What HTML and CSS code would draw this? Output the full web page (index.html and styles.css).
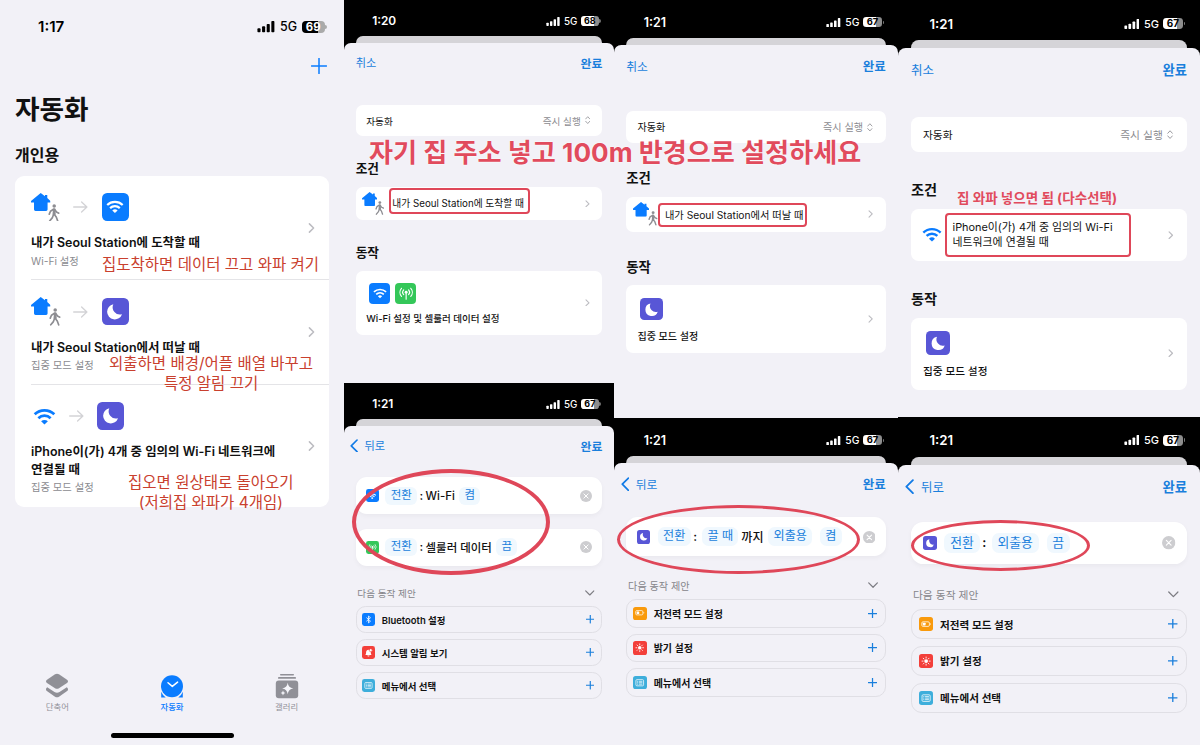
FILE: index.html
```html
<!DOCTYPE html>
<html lang="ko">
<head>
<meta charset="utf-8">
<title>자동화</title>
<link rel="stylesheet" href="styles.css">
</head>
<body>
<svg class="defs" aria-hidden="true">
  <symbol id="signal" viewBox="0 0 21 14"><rect x="0" y="9" width="3.8" height="5" rx="1"/><rect x="5.7" y="6.6" width="3.8" height="7.4" rx="1"/><rect x="11.4" y="3.6" width="3.8" height="10.4" rx="1"/><rect x="17.1" y="0" width="3.8" height="14" rx="1"/></symbol>
  <symbol id="wifi" viewBox="0 0 24 18"><path d="M1.6 6.7a15 15 0 0 1 20.8 0M5.5 10.8a9.4 9.4 0 0 1 13 0" fill="none" stroke="currentColor" stroke-width="2.9"/><path d="M12 17.5l-3.6-3.4a5.2 5.2 0 0 1 7.2 0z" fill="currentColor"/></symbol>
  <symbol id="moon" viewBox="0 0 24 24"><path d="M10.6 4.300A7.900 7.900 0 1 0 19.600 14.600 7.500 7.500 0 0 1 10.600 4.300z" fill="#fff"/></symbol>
  <symbol id="house" viewBox="0 0 19.5 18"><path d="M9.700 0L14 3.300V2h2.300v3.100L19.500 8v1.600h-2.900V16.500q0 1.500-1.500 1.500H4.500Q3 18 3 16.500V9.600H0V8z" fill="#0a7cff"/></symbol>
  <symbol id="walk" viewBox="0 0 12 18"><circle cx="6.3" cy="1.900" r="1.800" fill="#8d8d92"/><path d="M6.200 5.200L5.700 10.500M5.600 5.300L2.500 7.200L1.300 10.200M6.700 5.300L8.600 8L11 9.200M5.700 10.300L4.500 13.700L1.800 17M6.200 10.300L8.400 13L9.800 17" fill="none" stroke="#8d8d92" stroke-width="1.700" stroke-linecap="round" stroke-linejoin="round"/><path d="M5 4.500h2.300l.6 6.300H4.700z" fill="#8d8d92"/></symbol>
  <symbol id="arrow" viewBox="0 0 15 12"><path d="M.7 6h13M8.600 1l5.300 5-5.300 5" fill="none" stroke="#d3d3d6" stroke-width="1.300" stroke-linecap="round" stroke-linejoin="round"/></symbol>
  <symbol id="chev" viewBox="0 0 8 12"><path d="M1.600 1.300L6.400 6 1.600 10.700" fill="none" stroke="#bcbcc1" stroke-width="1.700" stroke-linecap="round" stroke-linejoin="round"/></symbol>
  <symbol id="updown" viewBox="0 0 9 14"><path d="M1 5L4.500 1.200 8 5M1 9l3.500 3.800L8 9" fill="none" stroke="#8a8a8f" stroke-width="1.300" stroke-linecap="round" stroke-linejoin="round"/></symbol>
  <symbol id="back" viewBox="0 0 12 20"><path d="M10.300 1.500L1.800 10l8.500 8.500" fill="none" stroke="#127be6" stroke-width="2.400" stroke-linecap="round" stroke-linejoin="round"/></symbol>
  <symbol id="down" viewBox="0 0 14 9"><path d="M1 1.300l6 6 6-6" fill="none" stroke="#7d7d83" stroke-width="1.700" stroke-linecap="round" stroke-linejoin="round"/></symbol>
  <symbol id="plus" viewBox="0 0 16 16"><path d="M8 .5v15M.5 8h15" fill="none" stroke="currentColor" stroke-width="var(--w,1.500)" stroke-linecap="round"/></symbol>
  <symbol id="clear" viewBox="0 0 18 18"><circle cx="9" cy="9" r="9" fill="#cdcdd0"/><path d="M5.800 5.800l6.400 6.400m0-6.400l-6.400 6.400" stroke="#fff" stroke-width="1.500" stroke-linecap="round"/></symbol>
  <symbol id="antenna" viewBox="0 0 24 24"><g fill="none" stroke="#fff" stroke-width="1.500" stroke-linecap="round"><path d="M12 11v9M8.800 14a4.500 4.500 0 0 1 0-6.200M15.200 7.800a4.500 4.500 0 0 1 0 6.200M5.900 16.200a8 8 0 0 1 0-10.600M18.100 5.600a8 8 0 0 1 0 10.600"/></g><circle cx="12" cy="10.800" r="1.900" fill="#fff"/></symbol>
  <symbol id="bt" viewBox="0 0 24 24"><path d="M7.500 8l9 7.800-4.500 3.700v-15l4.500 3.700-9 7.800" fill="none" stroke="#fff" stroke-width="1.800" stroke-linejoin="round"/></symbol>
  <symbol id="bell" viewBox="0 0 24 24"><path d="M5 17.500c1.500-1.500 1.700-3 1.800-6C7 8 9 6 12 6c3.500 0 5 2.500 5.200 5.500.1 3 .3 4.500 1.800 6zM9.500 18.500h5a2.500 2.500 0 0 1-5 0z" fill="#fff"/><circle cx="17" cy="7" r="3.300" fill="#fff" stroke="#f33f3a" stroke-width="1.300"/></symbol>
  <symbol id="menu" viewBox="0 0 24 24"><rect x="4" y="5.500" width="16" height="13" rx="2.200" fill="none" stroke="#fff" stroke-width="1.500"/><path d="M6.500 9h2M10 9h7.500M6.500 12h2M10 12h7.500M6.500 15h2M10 15h7.500" stroke="#fff" stroke-width="1.500"/></symbol>
  <symbol id="power" viewBox="0 0 24 24"><rect x="3.500" y="7.500" width="15" height="9" rx="2.500" fill="none" stroke="#fff" stroke-width="1.500"/><rect x="5.500" y="9.500" width="5.500" height="5" rx="1" fill="#fff"/><path d="M20 10.200v3.600q1.500-.5 1.500-1.800t-1.500-1.800z" fill="#fff"/></symbol>
  <symbol id="sun" viewBox="0 0 24 24"><circle cx="12" cy="12" r="3.700" fill="#fff"/><path d="M12 4v2M12 18v2M4 12h2M18 12h2M6.300 6.300l1.400 1.400M16.300 16.300l1.400 1.400M6.300 17.700l1.400-1.400M16.300 7.700l1.400-1.400" stroke="#fff" stroke-width="1.700" stroke-linecap="round"/></symbol>
</svg>

<main class="board">
  <section class="phone home">
    <header class="status"><span class="time">1:17</span><svg class="sig"><use href="#signal"/></svg><span class="net">5G</span><span class="batt">69</span></header>
    <div class="add"><svg><use href="#plus"/></svg></div>
    <h1>자동화</h1>
    <h2>개인용</h2>
    <div class="list">
      <article>
        <div class="info">
          <div class="flowline"><span class="arrive"><svg class="hs"><use href="#house"/></svg><svg class="wk"><use href="#walk"/></svg></span><svg class="ar"><use href="#arrow"/></svg><span class="tile blue"><svg class="wf"><use href="#wifi"/></svg></span></div>
          <p class="name">내가 Seoul Station에 도착할 때</p><p class="sub">Wi-Fi 설정</p>
        </div><svg class="chev"><use href="#chev"/></svg>
      </article>
      <article class="leaving">
        <div class="info">
          <div class="flowline"><span class="arrive"><svg class="hs"><use href="#house"/></svg><svg class="wk"><use href="#walk"/></svg></span><svg class="ar"><use href="#arrow"/></svg><span class="tile violet"><svg><use href="#moon"/></svg></span></div>
          <p class="name">내가 Seoul Station에서 떠날 때</p><p class="sub">집중 모드 설정</p>
        </div><svg class="chev"><use href="#chev"/></svg>
      </article>
      <article class="wifi-row">
        <div class="info">
          <div class="flowline"><svg class="bigwifi"><use href="#wifi"/></svg><svg class="ar"><use href="#arrow"/></svg><span class="tile violet"><svg><use href="#moon"/></svg></span></div>
          <p class="name">iPhone이(가) 4개 중 임의의 Wi-Fi 네트워크에<br>연결될 때</p><p class="sub">집중 모드 설정</p>
        </div><svg class="chev"><use href="#chev"/></svg>
      </article>
    </div>
    <nav class="tabs">
      <div class="tab"><svg viewBox="0 0 24 26"><path d="M10 1.300q2-1.200 4 0l8 5.400q2 1.600 0 3.200L14 15.200q-2 1.200-4 0L2 9.900q-2-1.600 0-3.200z"/><path d="M2.200 13.300q-2.500 2.200 0 4L10 22.700q2 1.200 4 0l7.800-5.400q2.500-1.800 0-4L14.500 18q-2.500 1.400-5 0z" transform="translate(0 1)"/></svg><span>단축어</span></div>
      <div class="tab on"><svg viewBox="0 0 24 26"><circle cx="12" cy="13.200" r="11"/><path d="M1.200 18.800v5.800h4.500q-3-2-4.500-5.800zM22.800 18.800v5.800h-4.500q3-2 4.500-5.800z"/><path d="M8 9.700l4.300 3.700 5.300-4.300" fill="none" stroke="#fff" stroke-width="1.500" stroke-linecap="round" stroke-linejoin="round"/></svg><span>자동화</span></div>
      <div class="tab"><svg viewBox="0 0 24 26"><rect x="5" y="1" width="14" height="1.500" rx=".7"/><rect x="3" y="3.900" width="18" height="1.900" rx=".9"/><rect x=".8" y="7.400" width="22.400" height="17.800" rx="3"/><path d="M12.700 9.800q.6 5 5.600 5.700-5 .7-5.600 5.700-.6-5-5.600-5.700 5-.7 5.600-5.700zM8 17.500q.3 2.200 2.400 2.500-2.100.3-2.400 2.500-.3-2.200-2.400-2.500 2.100-.3 2.400-2.500z" fill="#f5f5fa"/></svg><span>갤러리</span></div>
    </nav>
    <div class="indicator"></div>
  </section>

  <div class="pair s">
    <section class="phone">
      <header class="status"><span class="time">1:20</span><svg class="sig"><use href="#signal"/></svg><span class="net">5G</span><span class="batt">68</span></header>
      <div class="behind"></div>
      <div class="sheet">
        <nav class="nav"><span>취소</span><b>완료</b></nav>
        <div class="card run"><span>자동화</span><em>즉시 실행</em><svg><use href="#updown"/></svg></div>
        <h3>조건</h3>
        <div class="card cond"><span class="arrive"><svg class="hs"><use href="#house"/></svg><svg class="wk"><use href="#walk"/></svg></span><span class="what">내가 Seoul Station에 도착할 때</span><svg class="chev"><use href="#chev"/></svg></div>
        <h3>동작</h3>
        <div class="card act"><div><div class="tiles"><span class="tile blue"><svg class="wf"><use href="#wifi"/></svg></span><span class="tile green"><svg><use href="#antenna"/></svg></span></div><p>Wi-Fi 설정 및 셀룰러 데이터 설정</p></div><svg class="chev"><use href="#chev"/></svg></div>
      </div>
    </section>
    <section class="phone">
      <header class="status"><span class="time">1:21</span><svg class="sig"><use href="#signal"/></svg><span class="net">5G</span><span class="batt">67</span></header>
      <div class="behind"></div>
      <div class="sheet">
        <nav class="nav backnav"><svg><use href="#back"/></svg><span>뒤로</span><b>완료</b></nav>
        <div class="param"><span class="tile blue"><svg class="wf"><use href="#wifi"/></svg></span><i class="pill">전환</i><span class="colon">:</span><span class="word">Wi-Fi</span><i class="pill">켬</i><svg class="clear"><use href="#clear"/></svg></div>
        <div class="param"><span class="tile green"><svg><use href="#antenna"/></svg></span><i class="pill">전환</i><span class="colon">:</span><span class="word">셀룰러 데이터</span><i class="pill">끔</i><svg class="clear"><use href="#clear"/></svg></div>
        <div class="next"><span>다음 동작 제안</span><svg><use href="#down"/></svg></div>
        <div class="tip"><span class="tile blue"><svg><use href="#bt"/></svg></span><span>Bluetooth 설정</span><svg class="plus"><use href="#plus"/></svg></div>
        <div class="tip"><span class="tile red"><svg><use href="#bell"/></svg></span><span>시스템 알림 보기</span><svg class="plus"><use href="#plus"/></svg></div>
        <div class="tip"><span class="tile cyan"><svg><use href="#menu"/></svg></span><span>메뉴에서 선택</span><svg class="plus"><use href="#plus"/></svg></div>
      </div>
    </section>
  </div>

  <div class="pair m">
    <section class="phone">
      <header class="status"><span class="time">1:21</span><svg class="sig"><use href="#signal"/></svg><span class="net">5G</span><span class="batt">67</span></header>
      <div class="behind"></div>
      <div class="sheet">
        <nav class="nav"><span>취소</span><b>완료</b></nav>
        <div class="card run"><span>자동화</span><em>즉시 실행</em><svg><use href="#updown"/></svg></div>
        <h3>조건</h3>
        <div class="card cond leaving"><span class="arrive"><svg class="hs"><use href="#house"/></svg><svg class="wk"><use href="#walk"/></svg></span><span class="what">내가 Seoul Station에서 떠날 때</span><svg class="chev"><use href="#chev"/></svg></div>
        <h3>동작</h3>
        <div class="card act"><div><div class="tiles"><span class="tile violet"><svg><use href="#moon"/></svg></span></div><p>집중 모드 설정</p></div><svg class="chev"><use href="#chev"/></svg></div>
      </div>
    </section>
    <section class="phone">
      <header class="status"><span class="time">1:21</span><svg class="sig"><use href="#signal"/></svg><span class="net">5G</span><span class="batt">67</span></header>
      <div class="behind"></div>
      <div class="sheet">
        <nav class="nav backnav"><svg><use href="#back"/></svg><span>뒤로</span><b>완료</b></nav>
        <div class="param focus"><span class="tile violet"><svg><use href="#moon"/></svg></span><i class="pill">전환</i><span class="colon">:</span><i class="pill">끌 때</i><span class="word">까지</span><i class="pill">외출용</i><i class="pill state">켬</i><svg class="clear"><use href="#clear"/></svg></div>
        <div class="next"><span>다음 동작 제안</span><svg><use href="#down"/></svg></div>
        <div class="tip"><span class="tile orange"><svg><use href="#power"/></svg></span><span>저전력 모드 설정</span><svg class="plus"><use href="#plus"/></svg></div>
        <div class="tip"><span class="tile red"><svg><use href="#sun"/></svg></span><span>밝기 설정</span><svg class="plus"><use href="#plus"/></svg></div>
        <div class="tip"><span class="tile cyan"><svg><use href="#menu"/></svg></span><span>메뉴에서 선택</span><svg class="plus"><use href="#plus"/></svg></div>
      </div>
    </section>
  </div>

  <div class="pair l">
    <section class="phone">
      <header class="status"><span class="time">1:21</span><svg class="sig"><use href="#signal"/></svg><span class="net">5G</span><span class="batt">67</span></header>
      <div class="behind"></div>
      <div class="sheet">
        <nav class="nav"><span>취소</span><b>완료</b></nav>
        <div class="card run"><span>자동화</span><em>즉시 실행</em><svg><use href="#updown"/></svg></div>
        <h3>조건</h3>
        <div class="card cond tall"><svg class="bigwifi"><use href="#wifi"/></svg><span class="what">iPhone이(가) 4개 중 임의의 Wi-Fi<br>네트워크에 연결될 때</span><svg class="chev"><use href="#chev"/></svg></div>
        <h3>동작</h3>
        <div class="card act"><div><div class="tiles"><span class="tile violet"><svg><use href="#moon"/></svg></span></div><p>집중 모드 설정</p></div><svg class="chev"><use href="#chev"/></svg></div>
      </div>
    </section>
    <section class="phone">
      <header class="status"><span class="time">1:21</span><svg class="sig"><use href="#signal"/></svg><span class="net">5G</span><span class="batt">67</span></header>
      <div class="behind"></div>
      <div class="sheet">
        <nav class="nav backnav"><svg><use href="#back"/></svg><span>뒤로</span><b>완료</b></nav>
        <div class="param focus"><span class="tile violet"><svg><use href="#moon"/></svg></span><i class="pill">전환</i><span class="colon">:</span><i class="pill">외출용</i><i class="pill state">끔</i><svg class="clear"><use href="#clear"/></svg></div>
        <div class="next"><span>다음 동작 제안</span><svg><use href="#down"/></svg></div>
        <div class="tip"><span class="tile orange"><svg><use href="#power"/></svg></span><span>저전력 모드 설정</span><svg class="plus"><use href="#plus"/></svg></div>
        <div class="tip"><span class="tile red"><svg><use href="#sun"/></svg></span><span>밝기 설정</span><svg class="plus"><use href="#plus"/></svg></div>
        <div class="tip"><span class="tile cyan"><svg><use href="#menu"/></svg></span><span>메뉴에서 선택</span><svg class="plus"><use href="#plus"/></svg></div>
      </div>
    </section>
  </div>

  <!-- hand-made annotations over the screens -->
  <p class="note n1">집도착하면 데이터 끄고 와파 켜기</p>
  <p class="note n2">외출하면 배경/어플 배열 바꾸고<br>특정 알림 끄기</p>
  <p class="note n3">집오면 원상태로 돌아오기<br>(저희집 와파가 4개임)</p>
  <p class="note big">자기 집 주소 넣고 100m 반경으로 설정하세요</p>
  <p class="note mid">집 와파 넣으면 됨 (다수선택)</p>
  <div class="mark b1"></div><div class="mark b2"></div><div class="mark b3"></div>
  <div class="mark ring r1"></div><div class="mark ring r2"></div><div class="mark ring r3"></div>
</main>
</body>
</html>
```
FILE: styles.css
```css
* { box-sizing: border-box; margin: 0; padding: 0; }
html, body { width: 1200px; height: 745px; overflow: hidden; }
body { font-family: Inter, "Noto Sans CJK KR", sans-serif; background: #f2f1f7; color: #111; }
svg { display: block; flex: none; }
em, i { font-style: normal; }
.defs { position: absolute; width: 0; height: 0; }
.board { position: relative; display: flex; width: 1200px; height: 745px; white-space: nowrap; }

/* every screen is laid out in 393-point phone units */
.home { --u: .875px; width: 344px; }
.s { --u: .686px; width: 270px; grid-template-rows: 383px 362px; }
.m { --u: .7226px; width: 284px; grid-template-rows: 418px 327px; }
.l { --u: .768px; width: 302px; grid-template-rows: 416.500px 328.500px; }
.pair { display: grid; flex: none; }
.phone { display: flex; flex-direction: column; flex: none; overflow: hidden; }
.pair .phone { background: #000; }

.status { display: flex; align-items: center; flex: none; height: calc(var(--u) * 52.500); padding: calc(var(--u) * 9) calc(var(--u) * 20) 0 calc(var(--u) * 41); color: #fff; }
.time { font-size: calc(var(--u) * 17.300); font-weight: 600; margin-right: auto; }
.sig { width: calc(var(--u) * 20.500); height: calc(var(--u) * 13); fill: currentColor; }
.net { font-size: calc(var(--u) * 14.300); font-weight: 500; margin: 0 calc(var(--u) * 5) 0 calc(var(--u) * 6); }
.batt { position: relative; width: calc(var(--u) * 26.500); height: calc(var(--u) * 14.500); margin-right: calc(var(--u) * 2); border-radius: calc(var(--u) * 4.500); background: linear-gradient(90deg, #fff 70%, #8d8d8d 70%); color: #000; font-size: calc(var(--u) * 13); font-weight: 700; line-height: calc(var(--u) * 14.500); text-align: center; }
.batt::after { content: ""; position: absolute; right: calc(var(--u) * -2.500); top: 34%; width: calc(var(--u) * 1.700); height: 32%; border-radius: 0 2px 2px 0; background: #777; }

.behind { flex: none; height: calc(var(--u) * 20); margin: 0 calc(var(--u) * 17) calc(var(--u) * -10); border-radius: calc(var(--u) * 10) calc(var(--u) * 10) 0 0; background: #d5d4d8; }
.sheet { position: relative; flex: 1; min-height: 0; padding: 0 calc(var(--u) * 17); border-radius: calc(var(--u) * 10) calc(var(--u) * 10) 0 0; background: #f2f1f7; }
.nav { display: flex; align-items: center; justify-content: space-between; height: calc(var(--u) * 58); padding-bottom: calc(var(--u) * 1); color: #1a7fdc; font-size: calc(var(--u) * 16.300); }
.nav b { font-size: calc(var(--u) * 17.300); font-weight: 600; }
.backnav svg { width: calc(var(--u) * 12); height: calc(var(--u) * 20); margin-left: calc(var(--u) * -8); }
.backnav span { margin: 0 auto 0 calc(var(--u) * 9); }

.card { display: flex; align-items: center; border-radius: calc(var(--u) * 10); background: #fff; }
.card > .chev { margin-left: auto; margin-right: calc(var(--u) * 17.500); }
.chev { width: calc(var(--u) * 7.300); height: calc(var(--u) * 11); }
.run { height: calc(var(--u) * 45.500); margin-top: calc(var(--u) * 32.500); padding: 0 calc(var(--u) * 17.500) 0 calc(var(--u) * 15.500); font-size: calc(var(--u) * 14); }
.run em { margin-left: auto; margin-right: calc(var(--u) * 6); color: #8b8b90; }
.run svg { width: calc(var(--u) * 8); height: calc(var(--u) * 12); }
h3 { height: calc(var(--u) * 74); padding-top: calc(var(--u) * 23.500); line-height: calc(var(--u) * 51); font-size: calc(var(--u) * 18.500); font-weight: 700; }
.cond { height: calc(var(--u) * 48); padding-left: calc(var(--u) * 9); }
.what { font-size: calc(var(--u) * 14.200); margin-left: calc(var(--u) * 12.500); }
.cond.tall { height: calc(var(--u) * 67); padding-left: calc(var(--u) * 14); }
.tall .what { line-height: calc(var(--u) * 20); margin-left: calc(var(--u) * 14); }
.arrive { position: relative; width: calc(var(--u) * 32); height: calc(var(--u) * 33); flex: none; }
.hs { width: calc(var(--u) * 22.300); height: calc(var(--u) * 20.500); }
.wk { position: absolute; left: calc(var(--u) * 19.300); top: calc(var(--u) * 12.500); width: calc(var(--u) * 13.500); height: calc(var(--u) * 20.500); }
.leaving .wk { left: calc(var(--u) * 20.800); }
.bigwifi { width: calc(var(--u) * 26); height: calc(var(--u) * 19.500); color: #0a7cff; }
.act { height: calc(var(--u) * 94); align-items: stretch; padding: calc(var(--u) * 18) 0 0 calc(var(--u) * 15.500); }
.act > .chev { margin-top: calc(var(--u) * 23); }
.act p { margin-top: calc(var(--u) * 10); line-height: calc(var(--u) * 24); font-size: calc(var(--u) * 13.900); font-weight: 500; }
.tiles { display: flex; gap: calc(var(--u) * 7); padding-left: calc(var(--u) * 4); }

.tile { display: flex; align-items: center; justify-content: center; flex: none; width: var(--t); height: var(--t); --t: calc(var(--u) * 31); border-radius: calc(var(--t) * .19); color: #fff; }
.tile svg { width: calc(var(--t) * .86); height: calc(var(--t) * .86); }
.tile .wf { width: calc(var(--t) * .66); height: calc(var(--t) * .5); }
.blue { background: #0a7cff; } .green { background: #34c759; } .violet { background: #5856d6; }
.red { background: #f33f3a; } .cyan { background: #3eaedb; } .orange { background: #f99a0c; }

.param { display: flex; align-items: center; height: calc(var(--u) * 54); margin-top: calc(var(--u) * 21); padding: 0 calc(var(--u) * 14.500) 0 calc(var(--u) * 15); border-radius: calc(var(--u) * 16); background: #fff; box-shadow: 0 2px 5px #0000000a; font-size: calc(var(--u) * 16.700); }
.nav + .param { margin-top: calc(var(--u) * 17); }
.param .tile, .tip .tile { --t: calc(var(--u) * 18.500); }
.pill { margin-left: calc(var(--u) * 10); padding: 0 calc(var(--u) * 7.500); line-height: calc(var(--u) * 26); border-radius: calc(var(--u) * 9); background: #f0f8fe; color: #1a7fdc; }
.colon { margin: 0 calc(var(--u) * 3.500) 0 calc(var(--u) * 4); font-weight: 600; }
.word { font-weight: 500; }
.word + .pill { margin-left: calc(var(--u) * 6.500); }
.clear { width: calc(var(--u) * 17.500); height: calc(var(--u) * 17.500); margin-left: auto; }
.focus .colon { margin: 0 calc(var(--u) * 1.500) 0 calc(var(--u) * 3.500); }
.focus .pill.state { margin-left: calc(var(--u) * 10.500); }
.focus .colon + .pill { margin-left: calc(var(--u) * 5.500); }
.focus .word { margin-left: calc(var(--u) * 4); }

.next { display: flex; align-items: center; justify-content: space-between; height: calc(var(--u) * 59); padding: calc(var(--u) * 21) calc(var(--u) * 11) 0 calc(var(--u) * 2.500); font-size: calc(var(--u) * 14); color: #85858a; }
.next svg { width: calc(var(--u) * 14); height: calc(var(--u) * 9); }
.tip { display: flex; align-items: center; gap: calc(var(--u) * 9.500); height: calc(var(--u) * 39.500); margin-bottom: calc(var(--u) * 8.500); padding: 0 calc(var(--u) * 10.500) 0 calc(var(--u) * 8.500); border: 1px solid #e0dfe5; border-radius: calc(var(--u) * 14); font-size: calc(var(--u) * 13.800); font-weight: 600; }
.plus { width: calc(var(--u) * 12.500); height: calc(var(--u) * 12.500); margin-left: auto; color: #1a7fdc; --w: 2.200; }

/* main automation list */
.home { background: #f2f1f7; height: 745px; }
.home .status { color: #000; padding-left: 38px; height: 46px; }
.home .batt { color: #fff; background: linear-gradient(90deg, #000 70%, #aaa 70%); }
.home .batt::after { background: #aaa; }
.add { display: flex; justify-content: flex-end; height: 40px; padding: 12px 17.500px 0 0; color: #0a7cff; }
.add svg { width: 16px; height: 16px; }
h1 { height: 46px; padding-left: 15px; font-size: 26.700px; line-height: 46px; font-weight: 700; }
h2 { height: 43.500px; padding: 11px 0 0 15px; font-size: 16px; line-height: 24px; font-weight: 700; }
.list { height: 331px; margin: 0 15px 0 14.500px; border-radius: 9px; background: #fff; }
article { display: flex; height: 104.500px; margin-left: 16.500px; padding: 17px 14.500px 0 0; border-bottom: 1px solid #e4e4e7; }
article:last-child { height: 122px; border: 0; }
.info { flex: 1; }
article > .chev { margin-top: 29px; width: 7px; height: 12px; }
article:last-child > .chev { margin-top: 38px; }
.flowline { display: flex; align-items: center; height: 29px; }
.ar { width: 15px; height: 12px; margin: 0 13.500px 0 14px; }
.wifi-row .ar { margin-left: 13px; }
.flowline .bigwifi { width: 23px; height: 17px; margin-left: 1.500px; }
.name { margin-top: 12.500px; font-size: 12.450px; line-height: 17.500px; font-weight: 600; }
.sub { font-size: 10.300px; line-height: 18px; color: #8b8b90; }
.tabs { display: grid; grid-template-columns: 1fr 1fr 1fr; height: 50px; margin-top: 166px; }
.tab { display: flex; flex-direction: column; align-items: center; font-size: 8.400px; line-height: 12px; color: #909097; }
.tab svg { width: 24px; height: 26px; margin-bottom: 2px; fill: currentColor; }
.tab.on { color: #0a7cff; font-weight: 500; }
.indicator { width: 123px; height: 5px; margin: 10px auto 0 111px; border-radius: 3px; background: #000; }

.note { position: absolute; font-size: 15.500px; line-height: 20px; color: #c9402e; text-align: center; }
.n1 { left: 102px; top: 255px; }
.n2 { left: 109px; top: 354px; }
.n3 { left: 128px; top: 473px; }
.big { left: 369px; top: 133px; font-size: 26.150px; line-height: 40px; font-weight: 700; color: #e14b5d; text-shadow: 0 0 2px #fff, 0 0 1px #fff; }
.mid { left: 957px; top: 188px; font-size: 13.550px; font-weight: 700; color: #e14b5d; }
.mark { position: absolute; border: 2px solid #df4759; border-radius: 4px; }
.b1 { left: 389px; top: 188px; width: 141px; height: 26px; }
.b2 { left: 658px; top: 203px; width: 149px; height: 24px; }
.b3 { left: 945px; top: 213px; width: 186px; height: 44px; border-width: 2.500px; }
.ring { border-radius: 50%; border-width: 3.500px; }
.r1 { left: 352px; top: 469px; width: 198px; height: 106px; border-width: 4px; }
.r2 { left: 617px; top: 505px; width: 243px; height: 69px; }
.r3 { left: 911px; top: 520px; width: 179px; height: 51px; border-width: 3px; }
```
